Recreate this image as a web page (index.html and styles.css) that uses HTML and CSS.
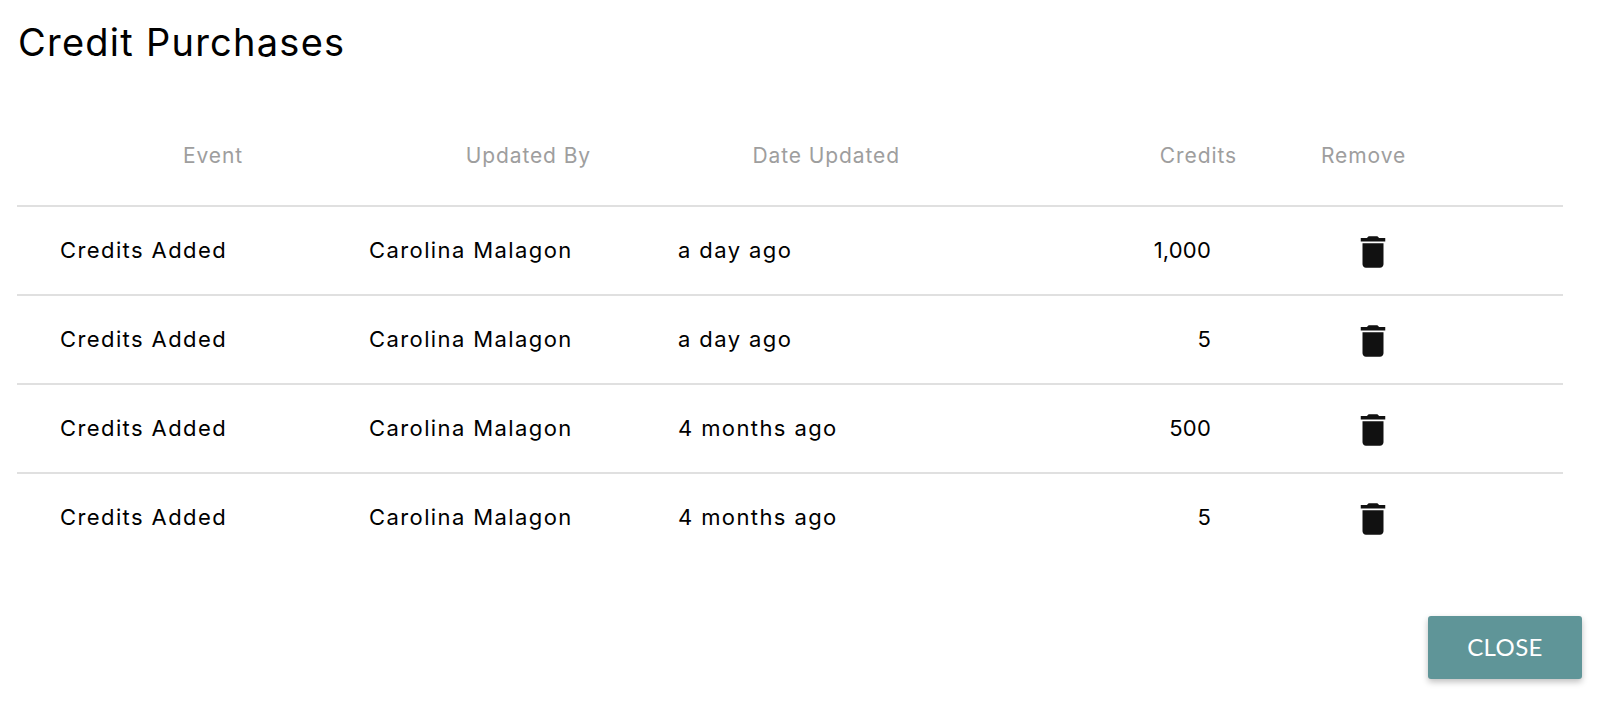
FILE: index.html
```html
<!DOCTYPE html>
<html lang="en">
<head>
    <meta charset="UTF-8">
    <meta name="viewport" content="width=device-width, initial-scale=1.0">
    <title>Credit Purchases</title>
    <link rel="stylesheet" href="styles.css">
</head>
<body>
    <div class="dialog">
        <h1 class="title">Credit Purchases</h1>
        <table class="credit-table">
            <thead>
                <tr>
                    <th class="col-event">Event</th>
                    <th class="col-user">Updated By</th>
                    <th class="col-date">Date Updated</th>
                    <th class="col-credits">Credits</th>
                    <th class="col-remove">Remove</th>
                </tr>
            </thead>
            <tbody>
                <tr>
                    <td>Credits Added</td>
                    <td>Carolina Malagon</td>
                    <td>a day ago</td>
                    <td class="amount">1,000</td>
                    <td class="remove-cell">
                        <svg class="trash" viewBox="0 0 24 24"><path d="M6 19c0 1.1.9 2 2 2h8c1.1 0 2-.9 2-2V7H6v12zM19 4h-3.5l-1-1h-5l-1 1H5v2h14V4z"/></svg>
                    </td>
                </tr>
                <tr>
                    <td>Credits Added</td>
                    <td>Carolina Malagon</td>
                    <td>a day ago</td>
                    <td class="amount">5</td>
                    <td class="remove-cell">
                        <svg class="trash" viewBox="0 0 24 24"><path d="M6 19c0 1.1.9 2 2 2h8c1.1 0 2-.9 2-2V7H6v12zM19 4h-3.5l-1-1h-5l-1 1H5v2h14V4z"/></svg>
                    </td>
                </tr>
                <tr>
                    <td>Credits Added</td>
                    <td>Carolina Malagon</td>
                    <td>4 months ago</td>
                    <td class="amount">500</td>
                    <td class="remove-cell">
                        <svg class="trash" viewBox="0 0 24 24"><path d="M6 19c0 1.1.9 2 2 2h8c1.1 0 2-.9 2-2V7H6v12zM19 4h-3.5l-1-1h-5l-1 1H5v2h14V4z"/></svg>
                    </td>
                </tr>
                <tr>
                    <td>Credits Added</td>
                    <td>Carolina Malagon</td>
                    <td>4 months ago</td>
                    <td class="amount">5</td>
                    <td class="remove-cell">
                        <svg class="trash" viewBox="0 0 24 24"><path d="M6 19c0 1.1.9 2 2 2h8c1.1 0 2-.9 2-2V7H6v12zM19 4h-3.5l-1-1h-5l-1 1H5v2h14V4z"/></svg>
                    </td>
                </tr>
            </tbody>
        </table>
        <div class="actions">
            <button class="close-btn">CLOSE</button>
        </div>
    </div>
</body>
</html>
```

FILE: styles.css
```css
* {
    margin: 0;
    padding: 0;
    box-sizing: border-box;
}
body {
    height: 704px;
    overflow: hidden;
    background: #ffffff;
    font-family: Inter, "Noto Sans", sans-serif;
    color: #000000;
}
.dialog {
    display: flex;
    flex-direction: column;
    height: 100%;
    padding: 18px 18px 25px 17px;
}
.title {
    height: 96px;
    padding-left: 1px;
    font-size: 38px;
    line-height: 48px;
    font-weight: 400;
    letter-spacing: 1.25px;
}
.credit-table {
    width: 1546px;
    table-layout: fixed;
    border-collapse: collapse;
}
.credit-table th {
    height: 92px;
    padding-bottom: 8px;
    font-size: 21px;
    font-weight: 400;
    letter-spacing: 0.9px;
    color: #9e9e9e;
    text-align: right;
}
.col-event { width: 309px; padding-right: 83px; }
.col-user { width: 309px; padding-right: 44px; }
.col-date { width: 365px; padding-right: 100px; }
.col-credits { width: 237px; }
.credit-table th.col-remove { width: 326px; padding-left: 84px; text-align: left; }
.credit-table td {
    height: 89px;
    padding-left: 43px;
    padding-bottom: 2px;
    border-top: 2px solid #e0e0e0;
    font-size: 22px;
    letter-spacing: 1.4px;
    vertical-align: middle;
}
.credit-table td.amount {
    padding-left: 0;
    padding-right: 26px;
    letter-spacing: 0.2px;
    text-align: right;
}
.credit-table td.remove-cell {
    padding-left: 115px;
    padding-bottom: 0;
}
.trash {
    display: block;
    width: 42px;
    height: 42px;
    margin-top: 2px;
    fill: #111111;
}
.actions {
    display: flex;
    justify-content: flex-end;
    margin-top: auto;
}
.close-btn {
    width: 154px;
    height: 63px;
    padding-bottom: 2px;
    border: none;
    border-radius: 3px;
    background: #5f9598;
    color: #ffffff;
    font-family: Lato, sans-serif;
    font-size: 24px;
    letter-spacing: 0.4px;
    box-shadow: 0 3px 6px rgba(0, 0, 0, 0.25);
}
```
